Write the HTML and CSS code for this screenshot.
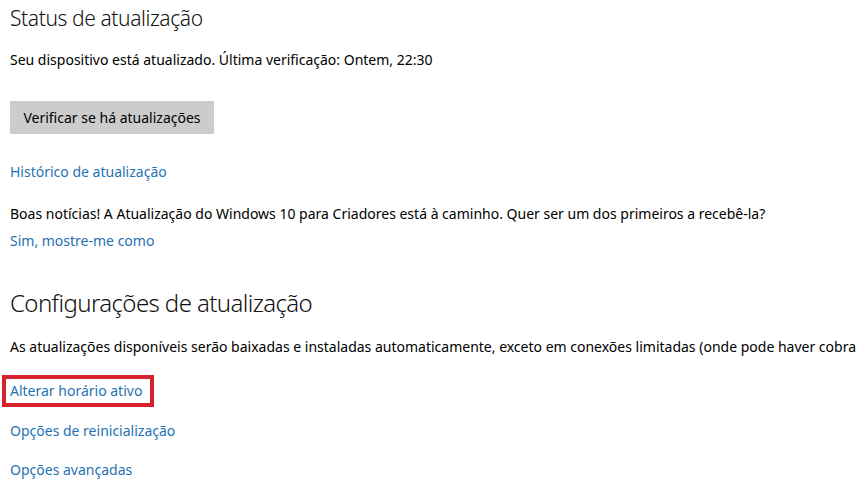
FILE: index.html
```html
<!DOCTYPE html>
<html lang="pt-BR">
<head>
    <meta charset="UTF-8">
    <title>Windows Update</title>
    <link rel="stylesheet" href="styles.css">
</head>
<body>
    <div class="page">
        <h1 class="title">Status de atualização</h1>
        <p class="text status">Seu dispositivo está atualizado. Última verificação: Ontem, 22:30</p>
        <button class="btn">Verificar se há atualizações</button>
        <a class="link history" href="#">Histórico de atualização</a>
        <p class="text news">Boas notícias! A Atualização do Windows 10 para Criadores está à caminho. Quer ser um dos primeiros a recebê-la?</p>
        <a class="link show-me" href="#">Sim, mostre-me como</a>

        <h1 class="title settings">Configurações de atualização</h1>
        <p class="text auto">As atualizações disponíveis serão baixadas e instaladas automaticamente, exceto em conexões limitadas (onde pode haver cobra</p>
        <div class="highlight">
            <a class="link" href="#">Alterar horário ativo</a>
        </div>
        <a class="link restart" href="#">Opções de reinicialização</a>
        <a class="link advanced" href="#">Opções avançadas</a>
    </div>
</body>
</html>
```

FILE: styles.css
```css
body {
    margin: 0;
    background-color: #fff;
    font-family: "Noto Sans", "Open Sans", sans-serif;
    color: #000;
    overflow: hidden;
}

.page {
    display: flex;
    flex-direction: column;
    align-items: flex-start;
    padding-left: 10px;
    width: 850px;
    overflow: hidden;
}

.title {
    margin: 0;
    font-size: 21px;
    font-weight: 300;
    line-height: 36px;
    letter-spacing: -0.4px;
    color: #111;
}

.text {
    margin: 0;
    font-size: 14px;
    line-height: 20px;
    white-space: nowrap;
}

.link {
    display: block;
    font-size: 14px;
    line-height: 20px;
    color: #1f72b3;
    text-decoration: none;
    white-space: nowrap;
}

.status {
    margin-top: 14px;
}

.btn {
    margin-top: 31px;
    height: 33px;
    width: 204px;
    padding: 0;
    border: 2px solid #ccc;
    background-color: #ccc;
    font-family: inherit;
    font-size: 14px;
    color: #000;
}

.history {
    margin-top: 28px;
}

.news {
    margin-top: 22px;
}

.show-me {
    margin-top: 7px;
}

.settings {
    margin-top: 34px;
    font-size: 24px;
    letter-spacing: -0.6px;
}

.auto {
    margin-top: 16px;
}

.highlight {
    margin-top: 18px;
    margin-left: -8px;
    padding: 0 8px 0 4px;
    border: 4px solid #d7222d;
}

.highlight .link {
    line-height: 24px;
}

.restart {
    margin-top: 14px;
}

.advanced {
    margin-top: 19px;
}
```
